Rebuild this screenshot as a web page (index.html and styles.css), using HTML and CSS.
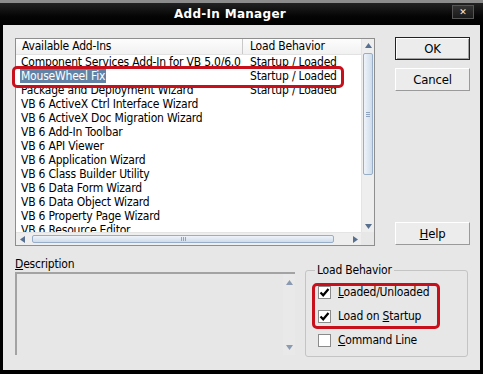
FILE: index.html
```html
<!DOCTYPE html>
<html lang="en">
<head>
    <meta charset="UTF-8">
    <title>Add-In Manager</title>
    <link rel="stylesheet" href="styles.css">
</head>
<body>
    <div class="window">
        <div class="titlebar">
            <span class="title">Add-In Manager</span>
            <span class="close">&#x2715;</span>
        </div>

        <div class="dialog">
            <div class="top">
                <div class="listview">
                    <div class="list-main">
                        <div class="list-area">
                            <div class="list-header">
                                <span class="col-name">Available Add-Ins</span>
                                <span class="col-load">Load Behavior</span>
                            </div>
                            <ul class="rows">
                                <li><span class="col-name">Component Services Add-In for VB 5.0/6.0</span><span class="col-load">Startup / Loaded</span></li>
                                <li class="selected"><span class="col-name"><span class="sel">MouseWheel Fix</span></span><span class="col-load">Startup / Loaded</span></li>
                                <li><span class="col-name">Package and Deployment Wizard</span><span class="col-load">Startup / Loaded</span></li>
                                <li><span class="col-name">VB 6 ActiveX Ctrl Interface Wizard</span></li>
                                <li><span class="col-name">VB 6 ActiveX Doc Migration Wizard</span></li>
                                <li><span class="col-name">VB 6 Add-In Toolbar</span></li>
                                <li><span class="col-name">VB 6 API Viewer</span></li>
                                <li><span class="col-name">VB 6 Application Wizard</span></li>
                                <li><span class="col-name">VB 6 Class Builder Utility</span></li>
                                <li><span class="col-name">VB 6 Data Form Wizard</span></li>
                                <li><span class="col-name">VB 6 Data Object Wizard</span></li>
                                <li><span class="col-name">VB 6 Property Page Wizard</span></li>
                                <li><span class="col-name">VB 6 Resource Editor</span></li>
                            </ul>
                        </div>
                        <div class="vscroll">
                            <span class="arrow"><svg width="7" height="5" viewBox="0 0 7 5"><polygon points="0,5 3.5,0 7,5" fill="#58708f"/></svg></span>
                            <div class="track">
                                <div class="thumb-v"><span class="grip-v"></span></div>
                            </div>
                            <span class="arrow"><svg width="7" height="5" viewBox="0 0 7 5"><polygon points="0,0 3.5,5 7,0" fill="#58708f"/></svg></span>
                        </div>
                    </div>
                    <div class="list-bottom">
                        <div class="hscroll">
                            <span class="arrow"><svg width="5" height="7" viewBox="0 0 5 7"><polygon points="5,0 0,3.5 5,7" fill="#58708f"/></svg></span>
                            <div class="track-h">
                                <div class="thumb-h"><span class="grip-h"></span></div>
                            </div>
                            <span class="arrow"><svg width="5" height="7" viewBox="0 0 5 7"><polygon points="0,0 5,3.5 0,7" fill="#58708f"/></svg></span>
                        </div>
                        <div class="corner"></div>
                    </div>
                    <div class="mark mark-row"></div>
                </div>

                <div class="buttons">
                    <button class="btn default">OK</button>
                    <button class="btn">Cancel</button>
                    <button class="btn help"><u>H</u>elp</button>
                </div>
            </div>

            <div class="bottom">
                <div class="description">
                    <div class="label"><u>D</u>escription</div>
                    <div class="desc-box">
                        <div class="desc-text"></div>
                        <div class="vscroll small">
                            <span class="arrow"><svg width="7" height="5" viewBox="0 0 7 5"><polygon points="0,5 3.5,0 7,5" fill="#8a9ab0"/></svg></span>
                            <span class="arrow"><svg width="7" height="5" viewBox="0 0 7 5"><polygon points="0,0 3.5,5 7,0" fill="#8a9ab0"/></svg></span>
                        </div>
                    </div>
                </div>

                <fieldset class="group">
                    <legend>Load Behavior</legend>
                    <div class="checks">
                        <label class="check"><span class="box"><svg width="11" height="11" viewBox="0 0 11 11"><path d="M1.5 5.5 L4.2 8.3 L9.5 2" fill="none" stroke="#000" stroke-width="2.2"/></svg></span><span><u>L</u>oaded/Unloaded</span></label>
                        <label class="check"><span class="box"><svg width="11" height="11" viewBox="0 0 11 11"><path d="M1.5 5.5 L4.2 8.3 L9.5 2" fill="none" stroke="#000" stroke-width="2.2"/></svg></span><span>Load on <u>S</u>tartup</span></label>
                        <label class="check"><span class="box"></span><span><u>C</u>ommand Line</span></label>
                    </div>
                    <div class="mark mark-checks"></div>
                </fieldset>
            </div>
        </div>
    </div>
</body>
</html>
```

FILE: styles.css
```css
body {
    margin: 0;
    background-color: #8c8c8c;
    font-family: "DejaVu Sans Condensed", "Liberation Sans", sans-serif;
    font-size: 12px;
    letter-spacing: -0.2px;
    color: #000;
}
.window {
    width: 483px;
    height: 371px;
    margin-top: 3px;
    background-color: #000;
    padding: 0 3px 4px 3px;
    box-sizing: border-box;
    display: flex;
    flex-direction: column;
}
.titlebar {
    height: 22px;
    display: flex;
    align-items: center;
    background: linear-gradient(#222, #050505 60%, #000);
    margin: 0 -3px;
}
.title {
    flex: 1;
    text-align: center;
    color: #fff;
    font-family: "DejaVu Sans", sans-serif;
    font-weight: bold;
    font-size: 12px;
    letter-spacing: 0.3px;
    padding-left: 8px;
}
.close {
    width: 20px;
    height: 12px;
    margin-right: 9px;
    margin-bottom: 4px;
    border: 1px solid #555;
    background: linear-gradient(#333, #1a1a1a);
    color: #eee;
    font-family: "DejaVu Sans", sans-serif;
    font-size: 9px;
    font-weight: bold;
    line-height: 12px;
    text-align: center;
}
.dialog {
    flex: 1;
    background-color: #e7e7e7;
    padding: 12px 10px 0 12px;
}
.top {
    display: flex;
    gap: 20px;
}
.listview {
    position: relative;
    width: 360px;
    height: 208px;
    margin-top: 1px;
    border: 1px solid #8e8e8e;
    box-sizing: border-box;
    background-color: #fff;
    display: flex;
    flex-direction: column;
}
.list-main {
    flex: 1;
    display: flex;
    min-height: 0;
}
.list-area {
    flex: 1;
    overflow: hidden;
}
.list-header {
    height: 16px;
    display: flex;
    background: linear-gradient(#fdfdfd, #f1f1f1);
    border-bottom: 1px solid #e2e2e2;
    box-sizing: border-box;
    line-height: 15px;
}
.list-header .col-name {
    padding-left: 6px;
    border-right: 1px solid #c9c9c9;
}
.col-name {
    width: 227px;
    flex: none;
    padding-left: 5px;
    box-sizing: border-box;
    white-space: nowrap;
}
.col-load {
    padding-left: 7px;
    white-space: nowrap;
}
.rows {
    list-style: none;
    margin: 0;
    padding: 0;
}
.rows li {
    display: flex;
    height: 14px;
    line-height: 14px;
}
.rows li.selected span {
    position: relative;
    z-index: 2;
}
.sel {
    background-color: #6283a6;
    color: #fff;
    padding: 0 1px;
    margin-left: -1px;
}
.mark {
    position: absolute;
    box-sizing: border-box;
    border: 3px solid #c8101c;
    border-radius: 5px;
}
.mark-row {
    left: -4px;
    top: 27px;
    width: 332px;
    height: 22px;
    background-color: #fff;
    z-index: 1;
}
.vscroll {
    width: 12px;
    background-color: #eeeeee;
    border-left: 1px solid #e4e4e4;
    display: flex;
    flex-direction: column;
    align-items: center;
}
.arrow {
    height: 12px;
    width: 12px;
    display: flex;
    align-items: center;
    justify-content: center;
    flex: none;
}
.track {
    flex: 1;
    width: 100%;
    padding: 2px 1px 0 1px;
    box-sizing: border-box;
}
.thumb-v {
    height: 122px;
    border: 1px solid #98aec8;
    border-radius: 2px;
    background: linear-gradient(to right, #eef3f9, #cfdcec);
    box-sizing: border-box;
    display: flex;
    align-items: center;
    justify-content: center;
}
.grip-v {
    width: 4px;
    height: 5px;
    background: repeating-linear-gradient(#8ea4bf 0 1px, transparent 1px 2px);
}
.list-bottom {
    height: 13px;
    display: flex;
}
.hscroll {
    flex: 1;
    display: flex;
    align-items: center;
    background-color: #eeeeee;
    border-top: 1px solid #e4e4e4;
}
.track-h {
    flex: 1;
    height: 100%;
    padding: 2px 15px 2px 4px;
    box-sizing: border-box;
}
.thumb-h {
    height: 100%;
    border: 1px solid #98aec8;
    border-radius: 2px;
    background: linear-gradient(#eef3f9, #cfdcec);
    box-sizing: border-box;
    display: flex;
    align-items: center;
    justify-content: center;
}
.grip-h {
    width: 5px;
    height: 4px;
    background: repeating-linear-gradient(to right, #8ea4bf 0 1px, transparent 1px 2px);
}
.corner {
    width: 13px;
    background-color: #e7e7e7;
}
.buttons {
    width: 75px;
    display: flex;
    flex-direction: column;
}
.btn {
    height: 23px;
    font-family: inherit;
    font-size: 13px;
    letter-spacing: inherit;
    background-color: #ececec;
    border: 1px solid;
    border-color: #fff #9a9a9a #9a9a9a #fff;
    padding: 0;
    color: #000;
}
.btn + .btn {
    margin-top: 8px;
}
.btn.default {
    border: 1px solid #222;
    box-shadow: inset 1px 1px #fff, inset -1px -1px #a0a0a0;
}
.btn.help {
    margin-top: auto;
    margin-bottom: 1px;
}
.bottom {
    display: flex;
    gap: 10px;
    margin-top: 11px;
}
.description {
    width: 280px;
}
.label {
    height: 14px;
    line-height: 14px;
}
.desc-box {
    height: 83px;
    margin-top: 1px;
    border-top: 2px solid #a3a3a3;
    border-left: 2px solid #a3a3a3;
    box-sizing: border-box;
    display: flex;
}
.desc-text {
    flex: 1;
}
.vscroll.small {
    justify-content: space-between;
    padding: 2px 0;
    border-left: none;
    background-color: #e9e9e9;
}
.group {
    position: relative;
    width: 163px;
    height: 94px;
    margin: 6px 0 0 0;
    padding: 0 0 0 12px;
    border: 1px solid #c4c4c4;
    border-radius: 3px;
    box-sizing: border-box;
}
.group legend {
    padding: 0 2px;
    margin-left: -3px;
    line-height: 14px;
}
.checks {
    display: flex;
    flex-direction: column;
    gap: 10px;
    padding-top: 8px;
}
.check {
    display: flex;
    align-items: center;
    height: 14px;
    line-height: 14px;
}
.box {
    width: 13px;
    height: 13px;
    margin-right: 7px;
    border: 1px solid #8b8b8b;
    background-color: #fff;
    box-sizing: border-box;
    display: flex;
    align-items: center;
    justify-content: center;
}
.mark-checks {
    left: 6px;
    top: 6px;
    width: 128px;
    height: 46px;
}
```
